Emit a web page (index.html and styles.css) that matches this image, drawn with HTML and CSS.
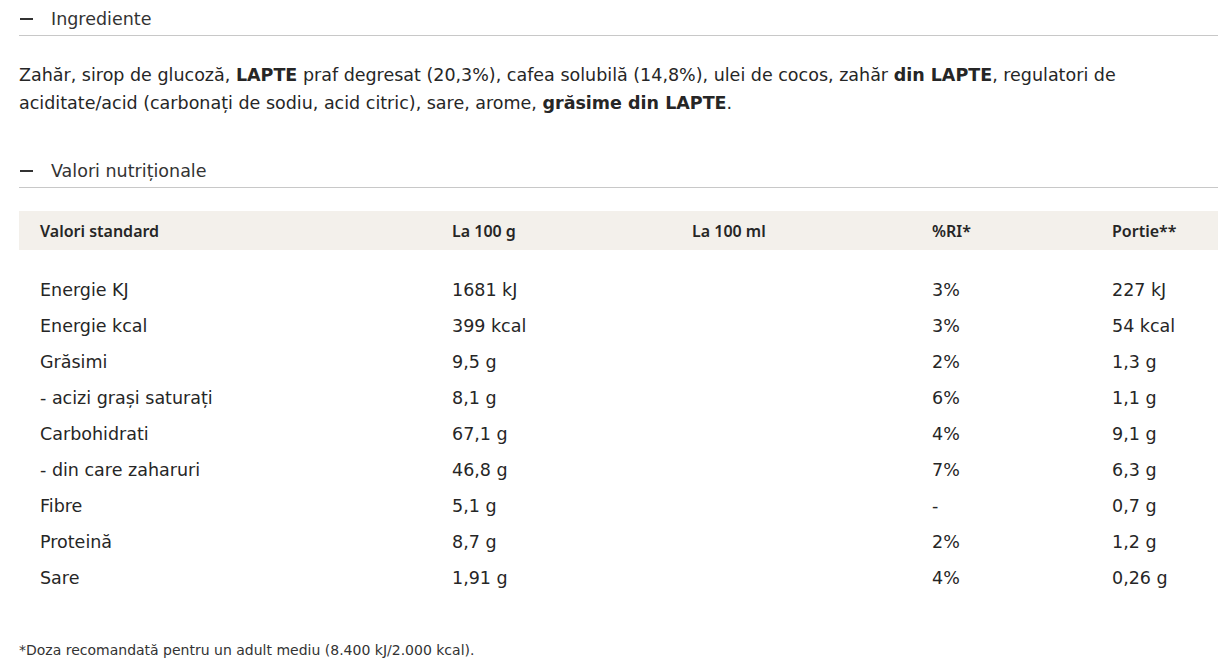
FILE: index.html
```html
<!DOCTYPE html>
<html lang="ro">
<head>
<meta charset="utf-8">
<link rel="stylesheet" href="styles.css">
</head>
<body>
<div class="page">
  <section class="acc">
    <div class="acc-head"><span class="minus"></span><span class="acc-title">Ingrediente</span></div>
    <p class="ingr">Zahăr, sirop de glucoză, <b>LAPTE</b> praf degresat (20,3%), cafea solubilă (14,8%), ulei de cocos, zahăr <b>din LAPTE</b>, regulatori de aciditate/acid (carbonați de sodiu, acid citric), sare, arome, <b>grăsime din LAPTE</b>.</p>
  </section>
  <section class="acc acc2">
    <div class="acc-head"><span class="minus"></span><span class="acc-title">Valori nutriționale</span></div>
    <table class="nut">
      <thead>
        <tr><th class="c1">Valori standard</th><th class="c2">La 100 g</th><th class="c3">La 100 ml</th><th class="c4">%RI*</th><th class="c5">Portie**</th></tr>
      </thead>
      <tbody>
        <tr class="first"><td>Energie KJ</td><td>1681 kJ</td><td></td><td>3%</td><td>227 kJ</td></tr>
        <tr><td>Energie kcal</td><td>399 kcal</td><td></td><td>3%</td><td>54 kcal</td></tr>
        <tr><td>Grăsimi</td><td>9,5 g</td><td></td><td>2%</td><td>1,3 g</td></tr>
        <tr><td>- acizi grași saturați</td><td>8,1 g</td><td></td><td>6%</td><td>1,1 g</td></tr>
        <tr><td>Carbohidrati</td><td>67,1 g</td><td></td><td>4%</td><td>9,1 g</td></tr>
        <tr><td>- din care zaharuri</td><td>46,8 g</td><td></td><td>7%</td><td>6,3 g</td></tr>
        <tr><td>Fibre</td><td>5,1 g</td><td></td><td>-</td><td>0,7 g</td></tr>
        <tr><td>Proteină</td><td>8,7 g</td><td></td><td>2%</td><td>1,2 g</td></tr>
        <tr><td>Sare</td><td>1,91 g</td><td></td><td>4%</td><td>0,26 g</td></tr>
      </tbody>
    </table>
    <p class="note">*Doza recomandată pentru un adult mediu (8.400 kJ/2.000 kcal).</p>
  </section>
</div>
</body>
</html>
```
FILE: styles.css
```css
html, body { margin: 0; padding: 0; background: #fff; }
body {
  font-family: "DejaVu Sans", "Noto Sans", sans-serif;
  color: #262626;
  overflow: hidden;
}
.page { padding: 0 12px 0 19px; }
.acc-head {
  display: flex;
  align-items: center;
  height: 36px;
  border-bottom: 1px solid #c8c8c8;
  box-sizing: border-box;
  padding-top: 3px;
}
.minus {
  display: block;
  width: 13px;
  height: 2px;
  background: #333;
  margin-left: 1px;
  margin-right: 18px;
}
.acc-title { font-size: 17.5px; line-height: 22px; color: #333; }
.ingr {
  margin: 25px 0 0;
  font-size: 17.5px;
  line-height: 28px;
}
.ingr b { font-weight: 600; }
.acc2 { margin-top: 35px; }
.nut {
  margin-top: 23px;
  width: 1199px;
  border-collapse: collapse;
  table-layout: fixed;
}
.nut th {
  background: #f3f0eb;
  height: 39px;
  text-align: left;
  font-family: "Noto Sans", sans-serif;
  font-size: 16px;
  font-weight: 600;
  padding: 0 0 0 21px;
}
.c1 { width: 391px; }
.c2 { width: 219px; }
.c3 { width: 219px; }
.c4 { width: 159px; }
.nut td {
  padding: 0 0 0 21px;
  height: 36px;
  font-size: 17.5px;
}
.nut tr.first td { padding-top: 22px; }
.note { margin: 46px 0 0; font-size: 14px; color: #333; }
```
